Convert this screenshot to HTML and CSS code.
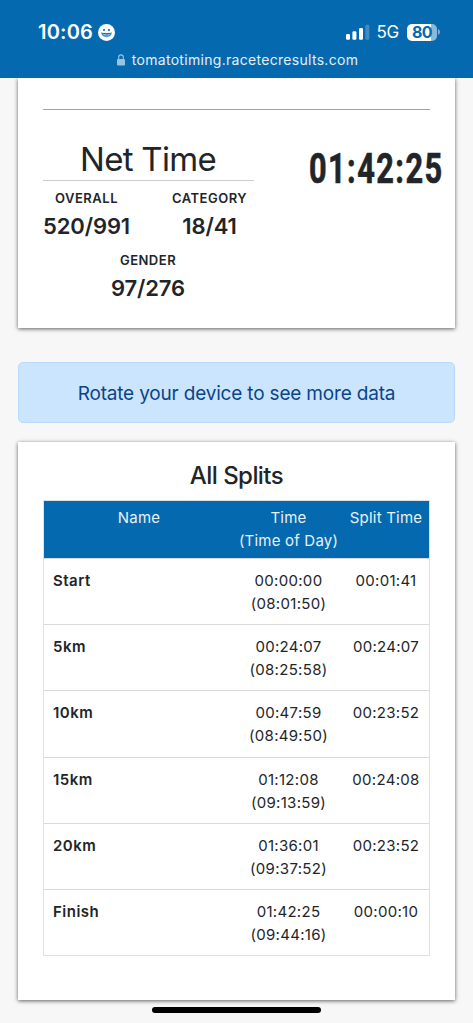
FILE: index.html
```html
<!DOCTYPE html>
<html lang="en">
<head>
<meta charset="utf-8">
<title>Race results</title>
<link rel="stylesheet" href="styles.css">
</head>
<body>
<header class="top">
  <div class="status">
    <div class="clock">
      <span class="clock-time">10:06</span>
      <svg class="smile" width="17" height="17" viewBox="0 0 17 17">
        <circle cx="8.5" cy="8.5" r="8.5" fill="#fff"/>
        <circle cx="6" cy="6" r="1.1" fill="#0569af"/>
        <circle cx="11" cy="6" r="1.1" fill="#0569af"/>
        <path d="M3.2 8.3C5.6 9.5 11.4 9.5 13.8 8.3C13.2 14.8 3.8 14.8 3.2 8.3Z" fill="#0569af"/>
        <path d="M4.4 10.2Q8.5 11.6 12.6 10.2M5.6 11.8Q8.5 12.7 11.4 11.8" stroke="#fff" stroke-width=".6" fill="none"/>
      </svg>
    </div>
    <div class="signal">
      <svg class="bars" width="24" height="16" viewBox="0 0 24 16" fill="#fff">
        <rect x="0" y="10" width="4" height="5.7" rx="1.2"/>
        <rect x="6.4" y="7.3" width="4" height="8.4" rx="1.2"/>
        <rect x="13" y="4" width="4" height="11.7" rx="1.2"/>
        <rect x="19.3" y=".7" width="4" height="15" rx="1.2" opacity=".24"/>
      </svg>
      <span class="network">5G</span>
      <div class="battery"><span class="level">80</span></div>
      <svg class="tip" width="2" height="6" viewBox="0 0 2 6"><path d="M0 0Q2 1 2 3T0 6Z" fill="#fff" opacity=".5"/></svg>
    </div>
  </div>
  <div class="address">
    <svg class="lock" width="8" height="12" viewBox="0 0 8 12">
      <rect x="0" y="5" width="8" height="6.5" rx="1.2" fill="#9bc3df"/>
      <path d="M1.7 5.2V3.2a2.3 2.3 0 0 1 4.6 0v2" fill="none" stroke="#9bc3df" stroke-width="1.1"/>
    </svg>
    <span class="url">tomatotiming.racetecresults.com</span>
  </div>
</header>
<main class="page">
  <section class="card summary">
    <div class="rule"></div>
    <div class="result">
      <div class="ranks">
        <h1 class="net">Net Time</h1>
        <div class="rank-list">
          <div class="rank overall"><div class="label">OVERALL</div><div class="value">520/991</div></div>
          <div class="rank category"><div class="label">CATEGORY</div><div class="value">18/41</div></div>
          <div class="rank gender"><div class="label">GENDER</div><div class="value">97/276</div></div>
        </div>
      </div>
      <div class="total"><span class="total-time">01:42:25</span></div>
    </div>
  </section>
  <div class="notice"><span>Rotate your device to see more data</span></div>
  <section class="card splits">
    <h2 class="heading">All Splits</h2>
    <div class="table">
      <div class="row head"><div>Name</div><div>Time<br><span class="tod">(Time of Day)</span></div><div class="nowrap">Split Time</div></div>
      <div class="row"><div class="name">Start</div><div>00:00:00<br>(08:01:50)</div><div>00:01:41</div></div>
      <div class="row"><div class="name">5km</div><div>00:24:07<br>(08:25:58)</div><div>00:24:07</div></div>
      <div class="row"><div class="name">10km</div><div>00:47:59<br>(08:49:50)</div><div>00:23:52</div></div>
      <div class="row"><div class="name">15km</div><div>01:12:08<br>(09:13:59)</div><div>00:24:08</div></div>
      <div class="row"><div class="name">20km</div><div>01:36:01<br>(09:37:52)</div><div>00:23:52</div></div>
      <div class="row"><div class="name">Finish</div><div>01:42:25<br>(09:44:16)</div><div>00:00:10</div></div>
    </div>
  </section>
</main>
<div class="home"></div>
</body>
</html>
```
FILE: styles.css
```css
* { box-sizing: border-box; }
body {
  margin: 0;
  height: 1023px;
  overflow: hidden;
  display: flex;
  flex-direction: column;
  background: #f7f7f7;
  color: #212529;
  font-family: Inter, "Liberation Sans", sans-serif;
}
.top { height: 78px; flex: none; background: #0569af; color: #fff; position: relative; z-index: 1; }
.status { height: 49px; padding: 14px 33px 0 38px; display: flex; justify-content: space-between; }
.clock, .signal { display: flex; align-items: center; height: 36px; }
.clock { gap: 5px; }
.clock-time { font-size: 20px; font-weight: 600; letter-spacing: 0.2px; }
.network { font-size: 17px; font-weight: 400; margin: 0 8px 0 7px; letter-spacing: -0.3px; }
.battery {
  width: 30px; height: 17px; border-radius: 5px;
  background: linear-gradient(90deg, #fff 24px, #8ab9da 24px);
  color: #0569af; text-align: center; line-height: 17px;
}
.level { font-size: 16px; font-weight: 700; display: block; letter-spacing: -0.6px; }
.tip { margin-left: 1px; }
.address { height: 21px; display: flex; align-items: center; justify-content: center; gap: 7px; }
.lock { margin-left: 2px; }
.url { font-size: 14px; letter-spacing: 0.3px; color: #e4eff7; }
.page { padding: 0 18px; display: flex; flex-direction: column; }
.card { background: #fff; box-shadow: 0 1px 4px rgba(0, 0, 0, 0.62); }
.summary { height: 250px; padding: 31px 25px 0 24.5px; }
.rule { height: 1px; background: #a0a2a3; }
.result { display: flex; }
.ranks { width: 211px; flex: none; padding-top: 28px; }
.net {
  margin: 0; height: 43px; line-height: 43px; text-align: center;
  font-size: 33px; font-weight: 400; border-bottom: 1px solid #cfcfcf; letter-spacing: -0.7px;
}
.rank-list { display: flex; flex-wrap: wrap; justify-content: space-between; padding-top: 7px; }
.rank { text-align: center; height: 62px; }
.overall { width: 88px; }
.category { width: 88px; }
.gender { width: 100%; }
.label { font-size: 13px; font-weight: 600; line-height: 20px; letter-spacing: 0.5px; }
.value { font-size: 22px; font-weight: 600; line-height: 36px; letter-spacing: -0.1px; }
.total { flex: 1; padding: 33px 0 0 55px; }
.total-time {
  display: block; width: max-content; font-family: Roboto, sans-serif; font-size: 42px; font-weight: 700;
  line-height: 52px; letter-spacing: 2px; transform: scaleX(0.73); transform-origin: 0 50%;
  -webkit-text-stroke: 0.7px #212529;
}
.notice {
  height: 61px; margin: 34px 0 19px; border: 1px solid #b8daff; border-radius: 5px;
  background: #cce5ff; color: #0b4488; font-size: 19px; letter-spacing: -0.18px; padding-top: 2px;
  display: flex; align-items: center; justify-content: center;
}
.splits { height: 558px; padding: 16px 25px 0; }
.heading { margin: 0; height: 42px; line-height: 36px; font-size: 24px; font-weight: 500; letter-spacing: -0.55px; text-align: center; }
.table { border: 1px solid #dee2e6; }
.row {
  display: grid; grid-template-columns: 190px 109px 1fr; height: 66.2px; padding-top: 10px;
  border-top: 1px solid #d8dadd; text-align: center; font-size: 15px; line-height: 23px; letter-spacing: 0.3px;
}
.head { height: 57px; padding-top: 5px; border-top: 0; background: #0569af; color: #e8f1f8; letter-spacing: 0.2px; }
.nowrap { white-space: nowrap; }
.name { text-align: left; padding-left: 9px; font-weight: 600; letter-spacing: 0.5px; }
.home { position: absolute; left: 152px; top: 1007px; width: 169px; height: 6px; border-radius: 3px; background: #000; }
```
